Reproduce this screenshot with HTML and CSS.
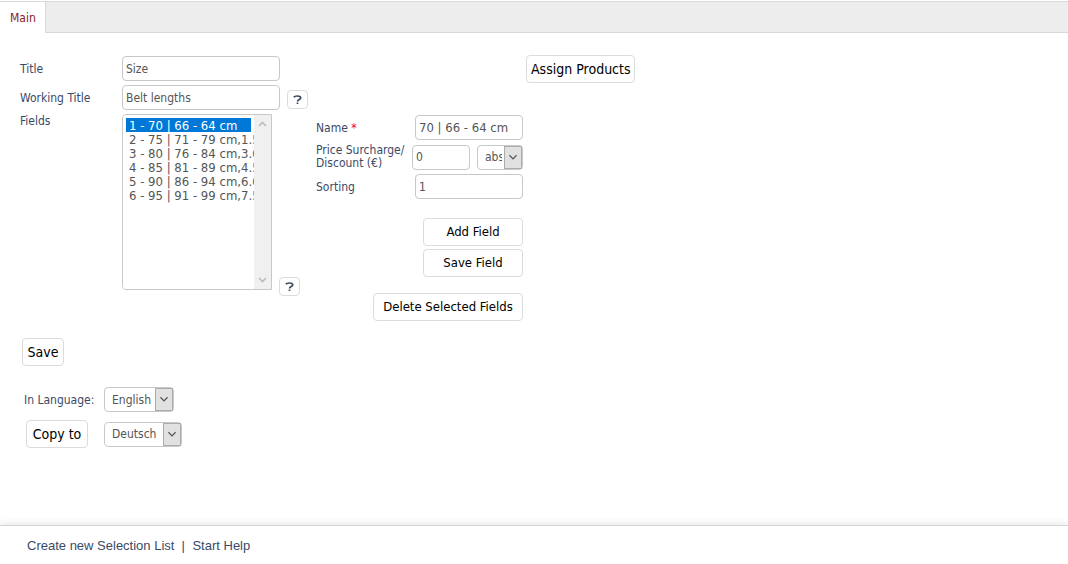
FILE: index.html
```html
<!DOCTYPE html>
<html lang="en">
<head>
<meta charset="utf-8">
<title>Selection Lists</title>
<link rel="stylesheet" href="styles.css">
</head>
<body>
<nav class="tabs"><a class="tab" href="#main">Main</a></nav>
<main class="content" id="main">
  <form class="editor">
    <div class="row">
      <label class="label" for="title">Title</label>
      <input class="input" id="title" type="text" value="Size">
    </div>
    <div class="row">
      <label class="label" for="working">Working Title</label>
      <input class="input" id="working" type="text" value="Belt lengths">
      <button class="help" type="button" aria-label="Help for working title"><svg width="9" height="10" viewBox="0 0 9 10"><path d="M.8 2.300C1.500 1.200 2.800 1 4.300 1 6.500 1 7.700 1.600 7.700 2.900 7.700 4.700 4.500 4.300 4.500 6.600M4.500 7.500v1.600"/></svg></button>
    </div>
    <div class="row fields">
      <label class="label" for="fields">Fields</label>
      <div class="listbox">
        <select class="list" id="fields" size="12">
          <option selected>1 - 70 | 66 - 64 cm</option>
          <option>2 - 75 | 71 - 79 cm,1.5</option>
          <option>3 - 80 | 76 - 84 cm,3.0</option>
          <option>4 - 85 | 81 - 89 cm,4.5</option>
          <option>5 - 90 | 86 - 94 cm,6.0</option>
          <option>6 - 95 | 91 - 99 cm,7.5</option>
        </select>
        <div class="scrollbar" aria-hidden="true">
          <svg width="9" height="6" viewBox="0 0 9 6"><path d="M1 5l3.500-3.500L8 5"/></svg>
          <svg width="9" height="6" viewBox="0 0 9 6"><path d="M1 1l3.500 3.500L8 1"/></svg>
        </div>
      </div>
      <button class="help help-list" type="button" aria-label="Help for fields"><svg width="9" height="10" viewBox="0 0 9 10"><path d="M.8 2.300C1.500 1.200 2.800 1 4.300 1 6.500 1 7.700 1.600 7.700 2.900 7.700 4.700 4.500 4.300 4.500 6.600M4.500 7.500v1.600"/></svg></button>
      <div class="details">
        <div class="detail"><label for="name">Name <span class="required">*</span></label><input class="input name" id="name" type="text" value="70 | 66 - 64 cm"></div>
        <div class="detail price"><label for="price">Price Surcharge/<br>Discount (€)</label><input class="input amount" id="price" type="text" value="0">
          <span class="dropdown unit"><select aria-label="Unit"><option>abs</option><option>%</option></select><svg class="arrow" viewBox="0 0 18 23"><path d="M5 9l4 4 4-4"/></svg></span></div>
        <div class="detail"><label for="sorting">Sorting</label><input class="input" id="sorting" type="text" value="1"></div>
        <div class="actions">
          <button class="button wide" type="button">Add Field</button>
          <button class="button wide" type="button">Save Field</button>
          <button class="button delete" type="button">Delete Selected Fields</button>
        </div>
      </div>
    </div>
    <button class="button save" type="button">Save</button>
    <div class="languages">
      <label for="language">In Language:</label>
      <span class="dropdown english"><select id="language"><option>English</option><option>Deutsch</option></select><svg class="arrow" viewBox="0 0 18 23"><path d="M5 9l4 4 4-4"/></svg></span>
      <button class="button copy" type="button">Copy to</button>
      <span class="dropdown deutsch"><select aria-label="Target language"><option>Deutsch</option><option>English</option></select><svg class="arrow" viewBox="0 0 18 23"><path d="M5 9l4 4 4-4"/></svg></span>
    </div>
  </form>
  <button class="button assign" type="button">Assign Products</button>
</main>
<footer class="footer"><a href="#new">Create new Selection List</a><span class="divider">|</span><a href="#help">Start Help</a></footer>
</body>
</html>
```
FILE: styles.css
```css
* { box-sizing: border-box; }
body {
  margin: 0;
  min-height: 100vh;
  padding-top: 1px;
  display: flex;
  flex-direction: column;
  background: #fff;
  color: #3a4a66;
  font: 12px/14px "DejaVu Sans Condensed", "DejaVu Sans", Tahoma, sans-serif;
}
a { color: inherit; text-decoration: none; }
input, select, button { font: inherit; color: #555; margin: 0; }
.tabs {
  height: 32px;
  display: flex;
  background: #ededed;
  border-top: 1px solid #d9d9d9;
  border-bottom: 1px solid #d9d9d9;
}
.tab {
  height: 31px;
  padding: 9px 9px 0 10px;
  background: #fff;
  border-right: 1px solid #d9d9d9;
  color: #8b1a1a;
}
.content {
  flex: 1;
  display: flex;
  align-items: flex-start;
  gap: 3px;
  padding: 22px 20px;
}
.editor { padding-top: 1px; width: 503px; }
.row { display: flex; align-items: center; margin-bottom: 4px; }
.label { width: 102px; }
.input {
  width: 158px;
  height: 25px;
  padding: 0 3px;
  border: 1px solid #c8c8c8;
  border-radius: 4px;
  background: #fff;
}
.help {
  width: 21px;
  height: 19px;
  margin: 4px 0 0 7px;
  padding: 0;
  display: flex;
  align-items: center;
  justify-content: center;
  border: 1px solid #dcdcdc;
  border-radius: 4px;
  background: #fff;
}
.help svg { fill: none; stroke: #3a4a60; stroke-width: 1.700; }
.fields { align-items: flex-start; margin: 0; }
.listbox {
  width: 150px;
  height: 176px;
  display: flex;
  border: 1px solid #c8c8c8;
  border-radius: 4px 0 0 4px;
  overflow: hidden;
}
.list {
  flex: 1;
  min-width: 0;
  height: 174px;
  padding: 3px;
  border: 0;
  outline: 0;
  background: #fff;
  font-size: 13px;
  overflow: hidden;
}
.list option { height: 14px; min-height: 14px; padding: 0 3px; line-height: 14px; }
.list option:checked {
  background: #0078d7 linear-gradient(#0078d7, #0078d7);
  -webkit-text-fill-color: #fff;
}
.scrollbar {
  width: 17px;
  padding: 6px 0;
  display: flex;
  flex-direction: column;
  align-items: center;
  justify-content: space-between;
  background: #f0f0f0;
}
.scrollbar svg { fill: none; stroke: #bcbcbc; stroke-width: 1.700; }
.help-list { margin-top: 163px; }
.details { flex: 1; margin-left: 16px; padding-top: 1px; }
.detail { display: flex; align-items: center; justify-content: space-between; margin-bottom: 5px; }
.detail .input { width: 108px; }
.detail .name { font-size: 13px; }
.detail.price { margin: -1px 0 4px; line-height: 13px; }
.detail .amount { width: 58px; }
.price label { width: 89px; white-space: nowrap; }
.required { color: #f00; }
.dropdown {
  position: relative;
  display: block;
  height: 25px;
}
.dropdown select {
  width: 100%;
  height: 25px;
  padding: 0 20px 0 7px;
  border: 1px solid #c8c8c8;
  border-radius: 4px;
  background: #fff;
  appearance: none;
  text-overflow: clip;
}
.arrow {
  position: absolute;
  top: 1px;
  right: 1px;
  width: 18px;
  height: 23px;
  border: 1px solid #acacac;
  background: #e1e1e1;
  pointer-events: none;
  fill: none;
  stroke: #555;
  stroke-width: 1.400;
}
.unit { width: 46px; }
.english { width: 70px; }
.deutsch { width: 78px; }
.actions {
  display: flex;
  flex-direction: column;
  align-items: flex-end;
  gap: 3px;
  padding-top: 14px;
}
.button {
  height: 28px;
  padding: 0 4px;
  border: 1px solid #dcdcdc;
  border-radius: 4px;
  background: #fff;
  color: #000;
  font-size: 14px;
  white-space: nowrap;
}
.actions .button { font-size: 13px; }
.wide { width: 100px; }
.delete { width: 150px; margin-top: 13px; }
.save { display: block; width: 42px; margin: 17px 0 0 2px; }
.assign { width: 109px; }
.languages {
  display: grid;
  grid-template-columns: 78px auto;
  justify-content: start;
  align-items: center;
  gap: 8px 2px;
  margin: 21px 0 0 4px;
}
.copy { width: 62px; margin-left: 2px; }
.footer {
  height: 39px;
  padding: 12px 27px;
  display: flex;
  gap: 7px;
  border-top: 1px solid #d5d5d5;
  box-shadow: 0 -1px 8px #e4e4e4;
  font: 13px/15px "Liberation Sans", Arial, sans-serif;
}
.divider { width: 4px; }
```
